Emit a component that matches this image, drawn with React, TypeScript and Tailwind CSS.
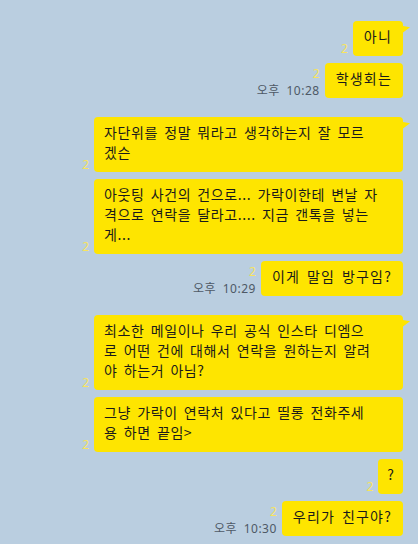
import React from "react";
import clsx from "clsx";

type Message = {
  lines: string[];
  multi?: boolean;
  tail?: boolean;
  time?: string;
  newGroup?: boolean;
};

const messages: Message[] = [
  { lines: ["아니"], tail: true },
  { lines: ["학생회는"], time: "오후 10:28" },
  {
    lines: ["자단위를 정말 뭐라고 생각하는지 잘 모르", "겠슨"],
    multi: true,
    tail: true,
    newGroup: true,
  },
  {
    lines: [
      "아웃팅 사건의 건으로... 가락이한테 변날 자",
      "격으로 연락을 달라고.... 지금 갠톡을 넣는",
      "게...",
    ],
    multi: true,
  },
  { lines: ["이게 말임 방구임?"], time: "오후 10:29" },
  {
    lines: [
      "최소한 메일이나 우리 공식 인스타 디엠으",
      "로 어떤 건에 대해서 연락을 원하는지 알려",
      "야 하는거 아님?",
    ],
    multi: true,
    tail: true,
    newGroup: true,
  },
  {
    lines: ["그냥 가락이 연락처 있다고 띨롱 전화주세", "용 하면 끝임>"],
    multi: true,
  },
  { lines: ["?"] },
  { lines: ["우리가 친구야?"], time: "오후 10:30" },
];

function Bubble({ m, first }: { m: Message; first: boolean }) {
  const single = !m.multi;
  const short = m.lines[0].length === 1;

  return (
    <div
      className={clsx(
        "flex items-end gap-[5px]",
        first ? "" : m.newGroup ? "mt-[19px]" : "mt-[7px]"
      )}
    >
      <div className="flex flex-col items-end font-['Noto_Sans','Noto_Sans_CJK_KR',sans-serif]">
        <span
          className={clsx(
            "text-[12px] leading-[14px] text-[#f7e35e]",
            m.time && "mb-[3px]"
          )}
        >
          2
        </span>
        {m.time && (
          <span className="text-[12px] leading-[14px] tracking-[0.5px] text-[#4e5966] [word-spacing:3px]">
            {m.time}
          </span>
        )}
      </div>

      <div
        className={clsx(
          "relative whitespace-nowrap rounded-[4px] bg-[#fee500] pt-[5px] pb-[10px] text-[14px] leading-[20px] text-[#1a1a1a] [word-spacing:2.5px]",
          m.multi && "w-[309px] px-[10px] tracking-[0.6px]",
          single && !short && "px-[11px] tracking-[1.2px]",
          short && "px-[9px]"
        )}
      >
        {m.lines.map((line, i) => (
          <React.Fragment key={i}>
            {i > 0 && <br />}
            {line}
          </React.Fragment>
        ))}

        {m.tail && (
          <svg
            className="absolute left-full top-[5px]"
            width="7"
            height="7"
            viewBox="0 0 7 7"
          >
            <path d="M0 0 L7 1.2 L0 6.5 Z" fill="#fee500" />
          </svg>
        )}
      </div>
    </div>
  );
}

export default function App() {
  return (
    <div className="min-h-screen w-full bg-[#bacee0] pt-[21px] pr-[15px] font-['Noto_Sans_CJK_KR',sans-serif]">
      <div className="flex flex-col items-end">
        {messages.map((m, i) => (
          <Bubble key={i} m={m} first={i === 0} />
        ))}
      </div>
    </div>
  );
}
